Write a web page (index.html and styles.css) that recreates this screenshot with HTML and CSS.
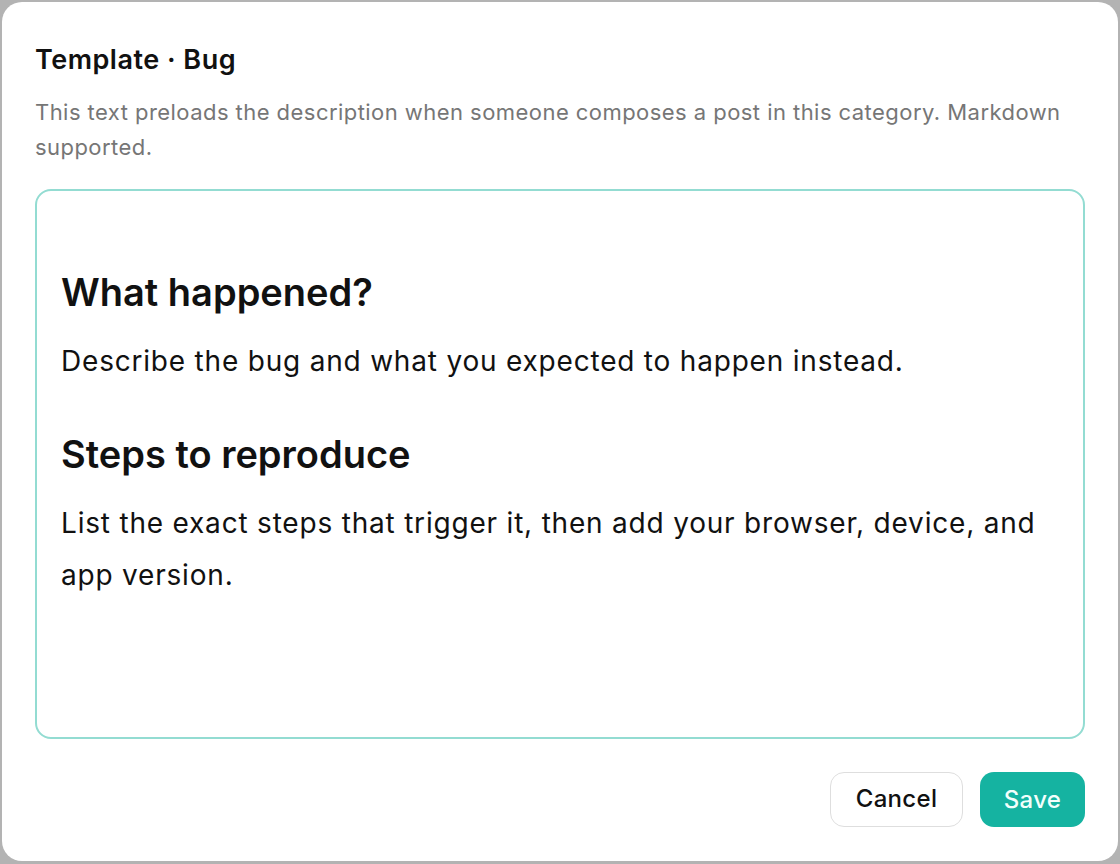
FILE: index.html
```html
<!doctype html>
<html lang="en">
<head>
	<meta charset="UTF-8">
	<title>Template · Bug</title>
	<link rel="stylesheet" href="styles.css">
</head>
<body>
	<div class="dialog">
		<h1 class="title">Template · Bug</h1>
		<p class="hint">This text preloads the description when someone composes a post in this category. Markdown supported.</p>
		<div class="editor" contenteditable="true">
			<h2>What happened?</h2>
			<p>Describe the bug and what you expected to happen instead.</p>
			<h2>Steps to reproduce</h2>
			<p>List the exact steps that trigger it, then add your browser, device, and app version.</p>
		</div>
		<div class="actions">
			<a href="javascript:;" class="btn btn-cancel">Cancel</a>
			<a href="javascript:;" class="btn btn-save">Save</a>
		</div>
	</div>
</body>
</html>
```

FILE: styles.css
```css
html,body,h1,h2,p,div{
	margin:0;
	padding:0;
}
html,body{
	height:100%;
}
body{
	background:#b3b3b3;
	font-family:Inter,"Noto Sans",sans-serif;
	color:#111;
	padding:2px 2px 3px 2px;
	box-sizing:border-box;
}
a{
	text-decoration:none;
}
.dialog{
	height:100%;
	box-sizing:border-box;
	background:#fff;
	border-radius:20px;
	padding:41px 33px 0 33px;
	display:flex;
	flex-direction:column;
}
.title{
	font-size:27px;
	font-weight:600;
	line-height:34px;
	letter-spacing:0.5px;
	margin-bottom:18px;
}
.hint{
	font-size:22px;
	line-height:35px;
	letter-spacing:0.45px;
	color:#767676;
	margin-bottom:24px;
}
.editor{
	flex-shrink:0;
	height:550px;
	box-sizing:border-box;
	border:2px solid #93dcd2;
	border-radius:16px;
	padding:78px 24px 0 24px;
	outline:none;
}
.editor h2{
	font-size:38px;
	font-weight:600;
	line-height:47px;
	margin-bottom:19px;
}
.editor p{
	font-size:28px;
	line-height:52px;
	letter-spacing:0.8px;
	margin-bottom:44px;
}
.actions{
	display:flex;
	justify-content:flex-end;
	gap:17px;
	margin-top:33px;
}
.btn{
	display:block;
	height:55px;
	line-height:55px;
	font-size:24px;
	font-weight:500;
	letter-spacing:0.3px;
	border-radius:14px;
	box-sizing:border-box;
	text-align:center;
}
.btn-cancel{
	width:133px;
	border:1.5px solid #dedede;
	line-height:52px;
	color:#111;
	background:#fff;
}
.btn-save{
	width:105px;
	background:#15b3a1;
	color:#f2fffc;
}
```
